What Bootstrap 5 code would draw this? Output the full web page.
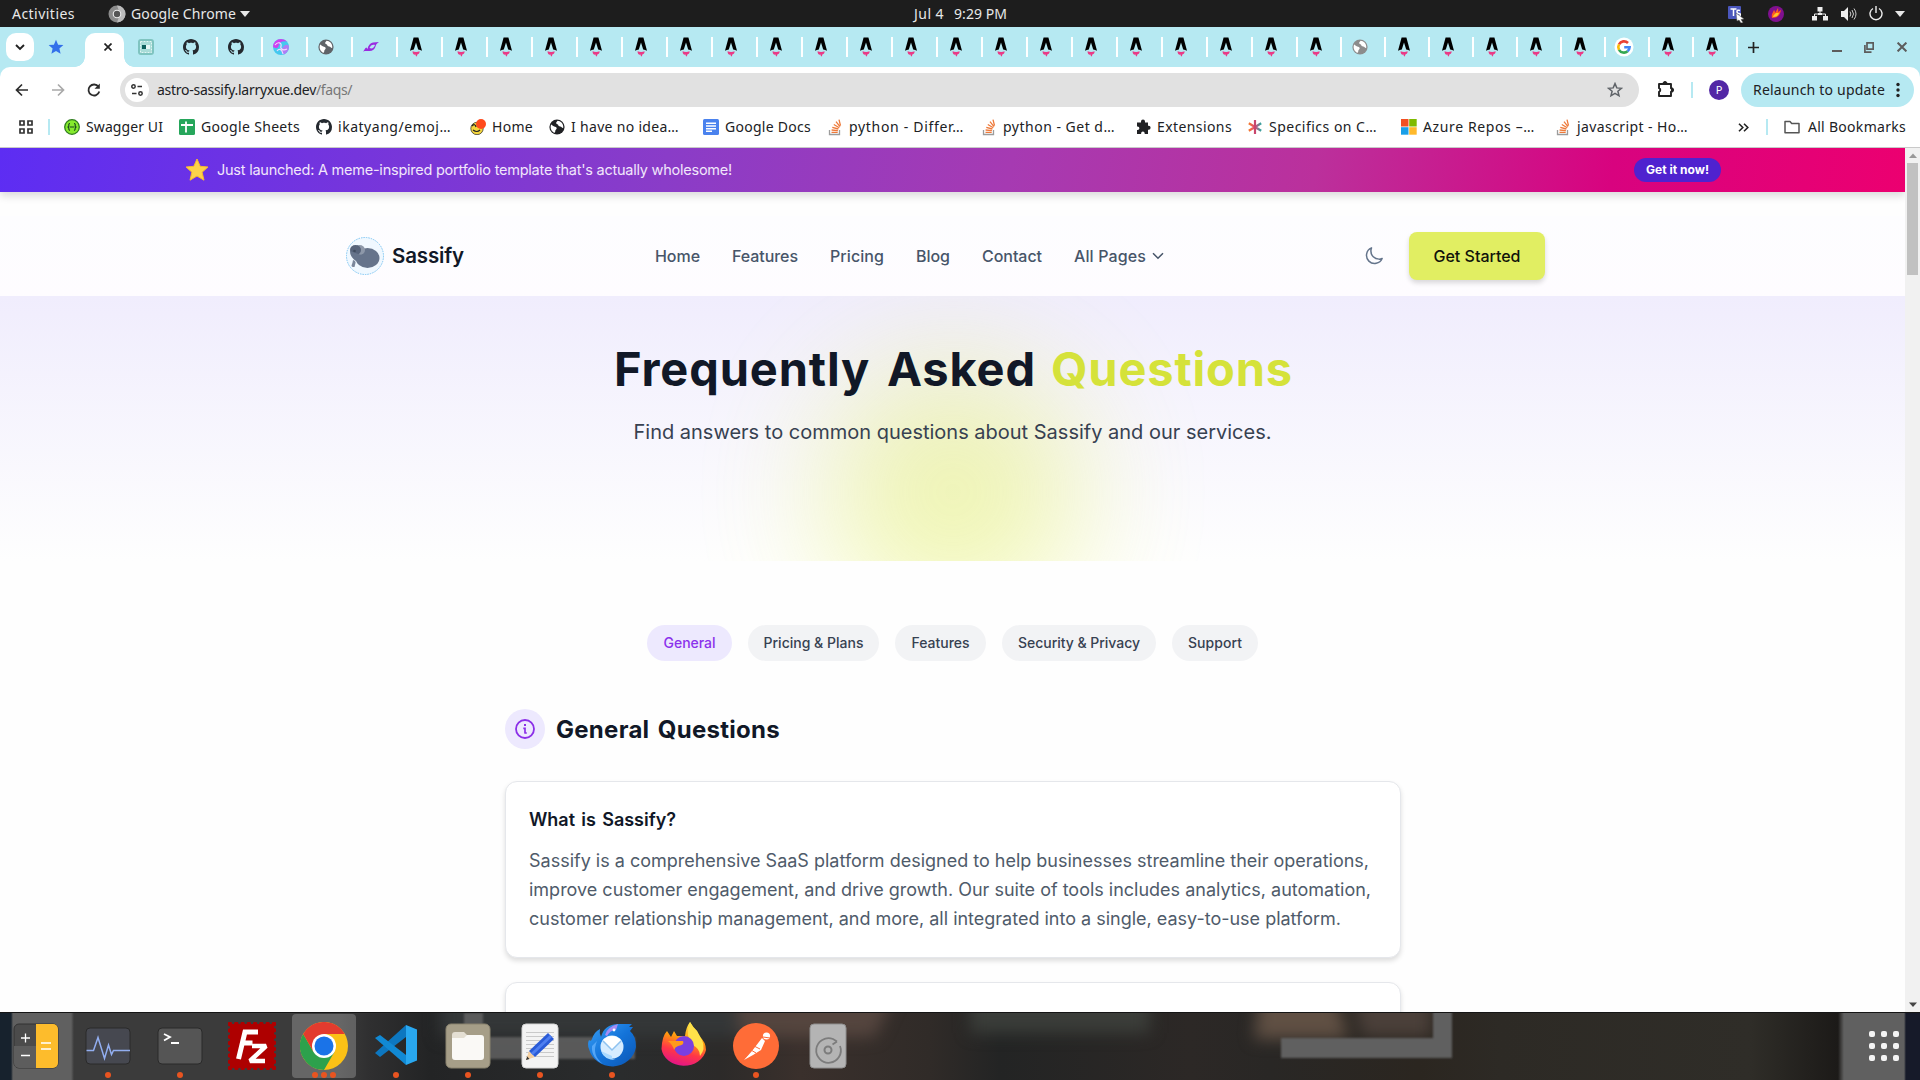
<!DOCTYPE html>
<html lang="en">
<head>
<meta charset="utf-8">
<title>FAQs - Sassify</title>
<link href="https://cdn.jsdelivr.net/npm/bootstrap@5.3.0/dist/css/bootstrap.min.css" rel="stylesheet">
<style>
body{width:1920px;height:1080px;overflow:hidden;font-family:Inter,"Liberation Sans",sans-serif;background:#fff}
svg{display:block;flex:none}
.ui{font-family:"Noto Sans","Open Sans",sans-serif;font-size:14px}
[data-w]{display:inline-block;white-space:nowrap;flex:none}
.topbar{height:27px;background:#1d1d1d;color:#e8e8e8;line-height:27px;padding:0 15px 0 12px}
.topbar .side{width:902px}
.tabstrip{height:40px;background:#b6e9f2;padding-left:6px}
.chev{width:28px;height:28px;border-radius:10px;background:#fff;margin-top:6px}
.tab-on{width:39px;height:34px;background:#fff;border-radius:10px 10px 0 0;margin:6px 0 0 25px;padding-left:19px;position:relative}
.tab-on::before,.tab-on::after{content:"";position:absolute;bottom:0;width:10px;height:10px}
.tab-on::before{left:-10px;background:radial-gradient(circle at 0 0,transparent 9.5px,#fff 10px)}
.tab-on::after{right:-10px;background:radial-gradient(circle at 100% 0,transparent 9.5px,#fff 10px)}
.tabcell{width:45px;height:20px;border-left:2px solid #fff;padding-left:8px;flex:none}
.tabcell.slim{width:44px}
.toolbar{height:46px;background:#fff;border-radius:10px 10px 0 0;padding-left:14px}
.toolbar [data-w],.marks [data-w]{margin-top:-1px}
.corner{background:#b6e9f2}
.omni{width:1519px;height:34px;border-radius:17px;background:#e1e1e1;margin-left:18px;padding:0 16px 0 5px;color:#202124}
.tune{width:24px;height:24px;border-radius:50%;background:#fff}
.vline{width:2px;height:16px;background:#b6e9f2;flex:none}
.avatar{width:20px;height:20px;border-radius:50%;background:#5227a5;color:#fff;font-size:11px;line-height:20px;text-align:center}
.relaunch{width:173px;height:34px;border-radius:17px;background:#b6e9f2;padding:0 11px 0 12px;color:#202124}
.marks{height:35px;color:#202124;border-bottom:1px solid #c9c9c9;padding:0 14px 6px 19px;background:#fff}
.bm{display:flex;align-items:center;gap:6px;flex:none}
.view{height:864px}
.page{width:1905px;overflow:hidden;background:#fefefe}
.promo{height:44px;background:linear-gradient(100deg,#5d2df3 0%,#8a3cc8 35%,#a63ab2 53%,#bb309c 69%,#d8037f 84.5%,#ec0070 100%);color:#f1e6fb;box-shadow:0 4px 8px rgba(0,0,0,.14);padding:0 184px;font-size:14.5px;position:relative}
.getit{width:87px;height:24px;border-radius:12px;background:#4f22cf;color:#fff;font-weight:700;font-size:12px;line-height:24px;text-align:center}
.site-head{height:80px;margin-top:24px;background:linear-gradient(#fdfdff,#fefcff);padding:0 360px 0 346px;font-size:16px;font-weight:500;color:#475569}
.display-f{font-family:Inter,"Liberation Sans",sans-serif;font-weight:700;color:#111827;word-spacing:.1em}
.cta{width:136px;height:48px;border-radius:8px;background:#e1ee62;color:#10130a;line-height:48px;text-align:center;box-shadow:0 3px 5px rgba(0,0,0,.15)}
.hero{height:265px;background:linear-gradient(#f0edfd,#fefefe);overflow:hidden;position:relative}
.glow{position:absolute;left:825px;top:68px;width:256px;height:256px;border-radius:50%;background:#dcec3c;opacity:.38;filter:blur(64px)}
.hero-copy{position:relative}
.hero h1{font-size:47px;line-height:60px;margin:0;padding:43px 0 0 2px}
.lime{color:#d5e23a}
.hero p{font-size:20px;line-height:28px;color:#374151;margin:19px 0 0}
.pillbtn{height:36px;border-radius:18px;background:#f2f3f5;color:#374151;font-size:14px;font-weight:500;line-height:36px;text-align:center}
.pillbtn.on{background:#ede9fe;color:#8b32ec}
.faq{width:896px;margin:48px 0 0 505px}
.roundic{width:40px;height:40px;border-radius:50%;background:#ede9fe}
.faq h2{font-size:24px;line-height:40px;margin:0;padding-top:1px;height:40px}
.faq-card{border:1px solid #e5e7eb;border-radius:12px;box-shadow:0 3px 5px rgba(0,0,0,.13);padding:24px 23px 0;height:177px;background:#fff;margin-bottom:24px}
.faq-card h3{font-size:18px;line-height:28px;font-weight:600;margin:0 0 12px}
.faq-card p{font-size:18px;line-height:29px;color:#4f5b6a;margin:0}
.sbar{width:15px;background:#f1f1f1}
.thumb{width:11px;height:112px;background:#c1c1c1;margin:0 auto}
.dock{height:68px;position:relative;overflow:hidden;border-top:1px solid #151515;
background:linear-gradient(90deg,#17222d 0 11px,#606060 13px 71px,#3b3b3b 74px 340px,#2f2f30 370px,#232425 430px,#2a2c2d 620px,#2c2a29 720px,#3a302c 800px,#302b28 930px,#232424 1000px,#2c2826 1190px,#292725 1270px,#2b2620 1420px,#2d2a25 1500px,#2f2d28 1750px,#1c1a18 1838px,#606060 1844px 1904px,#161a29 1906px)}
.wall{position:absolute;left:0;top:0}
.app{width:72px;height:67px;position:relative;flex:none;display:flex;justify-content:center}
.app>svg{margin-top:9px}
.app.on::before{content:"";position:absolute;left:4px;top:1px;width:64px;height:64px;border-radius:4px;background:rgba(255,255,255,.22)}
.app.on>svg{position:relative}
.dots{position:absolute;bottom:2px;left:0;right:0;display:flex;justify-content:center;gap:3px}
.dots i{width:6px;height:6px;border-radius:50%;background:#e95420}
</style>
<script src="https://cdn.jsdelivr.net/npm/bootstrap@5.3.0/dist/js/bootstrap.bundle.min.js"></script>
</head>
<body class="d-flex flex-column">
<svg width="0" height="0" class="position-absolute">
<defs>
<linearGradient id="gsw" x1="0" x2="1" y2="1"><stop offset="0" stop-color="#d33cf0"/><stop offset=".5" stop-color="#4fd0f0"/><stop offset="1" stop-color="#e870e0"/></linearGradient>
<linearGradient id="gff" x1=".7" y1="0" x2=".4" y2="1"><stop offset="0" stop-color="#fff44f"/><stop offset=".4" stop-color="#ff980e"/><stop offset=".7" stop-color="#ff3647"/><stop offset="1" stop-color="#e31587"/></linearGradient>
<linearGradient id="gtb" x1="0" y1="0" x2="1" y2="1"><stop offset="0" stop-color="#3aa0f5"/><stop offset=".5" stop-color="#1373d9"/><stop offset="1" stop-color="#0b56b4"/></linearGradient>
<linearGradient id="gas" x1="0" x2="1"><stop offset="0" stop-color="#f4792b"/><stop offset=".5" stop-color="#e0457b"/><stop offset="1" stop-color="#2ba7a0"/></linearGradient>
<symbol id="astro" viewBox="0 0 20 20"><path d="M7.600 .5h4.800L16 13.800a13 13 0 0 0-3.800-1.200L10 5.400l-2.200 7.200A13 13 0 0 0 4 13.800z" fill="#000"/><path d="M6.600 14.200c2 1 5 1 6.900 0 .3 1.600-.4 2.300-1.300 2.800-.8.400-1.200 1-1.200 2.500-1-.3-1.500-1-1.500-2-1.600.6-3.200-1-2.900-3.300z" fill="#ea3a86"/></symbol>
<symbol id="gh" viewBox="0 0 16 16"><path fill="#24292f" d="M8 0C3.580 0 0 3.580 0 8c0 3.540 2.290 6.530 5.470 7.590.4.070.55-.17.55-.38 0-.19-.01-.82-.01-1.490-2.010.37-2.530-.49-2.690-.94-.09-.23-.48-.94-.82-1.130-.28-.15-.68-.52-.01-.53.63-.01 1.080.58 1.230.82.72 1.210 1.870.87 2.330.66.07-.52.28-.87.51-1.070-1.780-.2-3.640-.89-3.640-3.950 0-.87.31-1.590.82-2.150-.08-.2-.36-1.020.08-2.120 0 0 .67-.21 2.200.82.64-.18 1.320-.27 2-.27s1.360.09 2 .27c1.530-1.040 2.200-.82 2.200-.82.44 1.100.16 1.920.08 2.120.51.56.82 1.270.82 2.150 0 3.070-1.870 3.750-3.650 3.950.29.25.54.73.54 1.480 0 1.070-.01 1.930-.01 2.200 0 .21.15.46.55.38A8.010 8.010 0 0 0 16 8c0-4.420-3.580-8-8-8z"/></symbol>
<symbol id="globe" viewBox="0 0 16 16"><circle cx="8" cy="8" r="7.600" fill="currentColor"/><path d="M2 5.500c1.500.5 2 2 4 2.200 1.200.3 2 .8 1.600 2-.3 1-1.300 1-1.300 2.200 0 1-.6 1.500-1 2C3 12.700 1.600 10.500 1.600 8z" fill="#fff"/><path d="M8.500 1.700C8 3 7 3 7.200 4.200 7.600 5.500 9.500 5 9.400 6.500c.2 1.200 1.600.6 2.600 1.300.8.600 1.300 1.200 2.200 1.300.3-2-.3-4.100-1.700-5.500A6 6 0 0 0 8.500 1.700z" fill="#fff"/></symbol>
<symbol id="goog" viewBox="0 0 20 20"><circle cx="10" cy="10" r="9.500" fill="#fff"/><g fill="none" stroke-width="2.600"><path d="M14 6A5.700 5.700 0 0 0 5 7.300" stroke="#ea4335"/><path d="M5 7.300a5.700 5.700 0 0 0 0 5.500" stroke="#fbbc05"/><path d="M5 12.800a5.700 5.700 0 0 0 8.600 1.400" stroke="#34a853"/><path d="M13.600 14.200a5.700 5.700 0 0 0 2-4h-5.400" stroke="#4285f4"/></g></symbol>
<symbol id="teal" viewBox="0 0 20 20"><rect x="2" y="2" width="16" height="16" rx="3" fill="#7fc4c0"/><rect x="4.500" y="4.500" width="11" height="11" fill="#a9dcd8" stroke="#e2f6f4" stroke-dasharray="2 1"/><rect x="6" y="8" width="4" height="4" fill="#0d5f5c"/><path d="M10 8h4v4h-4z" fill="#e8f8f6"/></symbol>
<symbol id="swirl" viewBox="0 0 20 20"><circle cx="10" cy="10" r="8" fill="#45c8ef"/><path d="M2 10a8 8 0 0 1 8-8q4 0 6 2.500Q9 3 8 8t-6 2z" fill="#d040f0"/><path d="M18 9q0 6-5 8.500Q9 14 12 10t6-1z" fill="#b07cf5"/><path d="M4 8c3-4 7-2 6 1s2 5 6 3M6 14c2-3 5-2 6 3" stroke="#f0d8ff" fill="none" stroke-width="1.200"/></symbol>
<symbol id="bird" viewBox="0 0 20 20"><path d="M2 14.500c1.500-1 2-4 3.500-4l1 1.500q1-5.500 5.500-6.500 3-.5 6-.5c-2 1.500-3 2-3.500 4.500s-3 4.500-6 4.500-4-.3-6.500.5z" fill="#9a2be0"/><path d="M8.500 11c1-3 3.500-4 5.500-3-1 3-3 4.200-5.500 3z" fill="#b6e9f2"/></symbol>
<symbol id="so" viewBox="0 0 16 18"><path d="M2.500 12v4.500h10V12" fill="none" stroke="#9c9c9c" stroke-width="1.300"/><g stroke="#ee7a3a" stroke-width="1.300"><path d="M4.500 14.300h6.200M4.600 12l6.300.7M5.300 9.300l6.100 1.700M6.800 6.500l5.500 3.200M9 3.700l4 5M12 1.600l1.500 6"/></g></symbol>
<symbol id="pz" viewBox="0 0 16 16"><path d="M6 2.500a2 2 0 0 1 4 0V3.500h3v3.200h.6a2 2 0 0 1 0 4H13V15H9.700v-.6a1.800 1.800 0 0 0-3.600 0v.6H2v-4h.6a1.800 1.800 0 0 0 0-3.600H2V3.500h4z" fill="#202124"/></symbol>
</defs></svg>

<header class="topbar ui d-flex align-items-center">
  <div class="side d-flex align-items-center">
    <span data-w="63">Activities</span>
    <svg width="18" height="18" viewBox="0 0 18 18" style="margin:0 5px 0 33px"><circle cx="9" cy="9" r="8.500" fill="#8b8b8b"/><path d="M9 .5A8.500 8.500 0 0 1 9 17.500L12 9z" fill="#bcbcbc"/><circle cx="9" cy="9" r="4.300" fill="#eee"/><circle cx="9" cy="9" r="3.200" fill="#555"/></svg>
    <span data-w="105">Google Chrome</span>
    <svg width="10" height="6" class="ms-1"><path d="M0 0h10L5 6z" fill="#e8e8e8"/></svg>
  </div>
  <span data-w="30">Jul 4</span><span data-w="53" style="margin-left:10px">9:29 PM</span>
  <div class="ms-auto d-flex align-items-center">
    <svg width="18" height="18" viewBox="0 0 18 18"><rect x="1" y="1" width="13" height="13" rx="1" fill="#4b57bd"/><path d="M3.500 4h6M6.500 4v7M13 5.500q-3-1-3 1t2 2 1 2.500-3 .5" fill="none" stroke="#fff" stroke-width="1.500"/><path d="M9 8l8 6-3 .5 2 3-2 .5-2-3-2 1z" fill="#fff" stroke="#555" stroke-width=".5"/></svg>
    <svg width="18" height="18" viewBox="0 0 18 18" style="margin-left:22px"><circle cx="9" cy="9" r="8" fill="#80108f"/><path d="M5 13c-1-4 1-5 2-8 1 1 1 2 1 3l3-5c.5 2 0 3 .2 4L14 5c-1 4-2 8-9 8z" fill="#ff5b1f"/><path d="M6 12c0-2 2-3 3-4l3 0c-1 3-3 4-6 4z" fill="#ffc928"/></svg>
    <svg width="16" height="14" viewBox="0 0 16 14" style="margin-left:27px"><path d="M8 3v4M2.500 10V7h11v3" stroke="#eee" fill="none"/><path d="M5.500 0h5v4.500h-5zM0 9h5v4.500H0zM11 9h5v4.500h-5zM6 6h4v2H6z" fill="#eee"/></svg>
    <svg width="16" height="14" viewBox="0 0 16 14" style="margin-left:13px"><path d="M0 4h3l4-4v14l-4-4H0z" fill="#eee"/><path d="M9 4.500q1.700 2.500 0 5M11 3q3 4 0 8M13 1.500q4 5.500 0 11" stroke="#ccc" fill="none"/></svg>
    <svg width="14" height="15" viewBox="0 0 14 15" style="margin-left:12px"><path d="M4 2.500a6 6 0 1 0 6 0M7 0v7" stroke="#eee" fill="none" stroke-width="1.400"/></svg>
    <svg width="10" height="6" style="margin-left:12px"><path d="M0 0h10L5 6z" fill="#e8e8e8"/></svg>
  </div>
</header>

<div class="tabstrip d-flex align-items-start">
  <div class="chev d-flex align-items-center justify-content-center"><svg width="10" height="7" viewBox="0 0 10 7"><path d="M1 1l4 4 4-4" fill="none" stroke="#222" stroke-width="1.900"/></svg></div>
  <svg width="16" height="16" viewBox="0 0 16 16" style="margin:12px -4px 0 14px"><path d="M8 .8l2.100 4.900 5.300.4-4 3.500 1.200 5.200L8 12l-4.600 2.800 1.200-5.200-4-3.500 5.300-.4z" fill="#3370ea"/></svg>
  <div class="tab-on d-flex align-items-center"><svg width="8" height="8" viewBox="0 0 8 8" style="margin-top:-6px"><path d="M.5.5l7 7M7.500.5l-7 7" stroke="#222" stroke-width="1.700"/></svg></div>
  <svg width="20" height="20" style="margin:10px 15px 0 12px"><use href="#teal"/></svg>
  <div id="tabs" class="d-flex" style="margin-top:10px"></div>
  <div class="tabcell" style="margin-top:10px;width:18px"></div>
  <svg width="11" height="11" viewBox="0 0 11 11" style="margin-top:15px;margin-left:-6px"><path d="M5.500 0v11M0 5.500h11" stroke="#222" stroke-width="1.700"/></svg>
  <div class="ms-auto d-flex align-items-center" style="margin:14px 13px 0 0;gap:22px">
    <svg width="10" height="12"><path d="M0 10h10" stroke="#5c5c5c" stroke-width="2"/></svg>
    <svg width="10" height="11" viewBox="0 0 10 11" style="margin-right:1px"><path d="M3 .9h6.200v6.200H3zM.9 3v7.100H7.500" fill="none" stroke="#5c5c5c" stroke-width="1.700"/></svg>
    <svg width="10" height="10" viewBox="0 0 10 10"><path d="M.6.6l8.800 8.800M9.400.6L.6 9.400" stroke="#5c5c5c" stroke-width="2"/></svg>
  </div>
</div>

<div class="corner"><div class="toolbar ui d-flex align-items-center">
  <svg width="16" height="16" viewBox="0 0 16 16"><path d="M14 8H3M8 2.500L2.500 8 8 13.500" fill="none" stroke="#2c2c2c" stroke-width="1.700"/></svg>
  <svg width="16" height="16" viewBox="0 0 16 16" style="margin-left:20px"><path d="M2 8h11M8 2.500L13.500 8 8 13.500" fill="none" stroke="#a9a9a9" stroke-width="1.700"/></svg>
  <svg width="16" height="16" viewBox="0 0 16 16" style="margin-left:20px"><path d="M13.300 9.500A5.500 5.500 0 1 1 12.500 4.800" fill="none" stroke="#2c2c2c" stroke-width="1.800"/><path d="M13.800 1.500v5.300H8.500z" fill="#2c2c2c"/></svg>
  <div class="omni d-flex align-items-center">
    <div class="tune d-flex align-items-center justify-content-center"><svg width="12" height="12" viewBox="0 0 12 12" fill="none" stroke="#333" stroke-width="1.500"><circle cx="2.500" cy="2.500" r="1.700"/><path d="M6.500 2.500H11M1 9.500h4.500"/><circle cx="9.500" cy="9.500" r="1.700"/></svg></div>
    <span data-w="159" style="margin-left:8px">astro-sassify.larryxue.dev</span><span data-w="36" style="color:#777">/faqs/</span>
    <svg width="16" height="16" viewBox="0 0 16 16" class="ms-auto"><path d="M8 1.600l1.800 4.300 4.600.4-3.500 3 1.100 4.500L8 11.400l-4 2.400 1.100-4.500-3.500-3 4.600-.4z" fill="none" stroke="#5f6368" stroke-width="1.500"/></svg>
  </div>
  <svg width="18" height="18" viewBox="0 0 18 18" style="margin-left:18px;margin-top:-2px"><path d="M2 4h12v4.300a1.700 1.700 0 0 1 0 3.400V16H2v-4.200a1.900 1.900 0 0 0 0-3.600z" fill="none" stroke="#222" stroke-width="1.900" stroke-linejoin="round"/><path d="M6 3.500a2 2 0 0 1 4 0zM14.500 8a2 2 0 0 1 0 4z" fill="#222" stroke="#222"/></svg>
  <div class="vline" style="margin:0 16px 0 16px"></div>
  <div class="avatar">P</div>
  <div class="relaunch d-flex align-items-center justify-content-between" style="margin-left:12px"><span data-w="132">Relaunch to update</span><svg width="10" height="16"><g fill="#222"><circle cx="5" cy="2.500" r="1.700"/><circle cx="5" cy="8" r="1.700"/><circle cx="5" cy="13.500" r="1.700"/></g></svg></div>
</div></div>

<div class="marks ui d-flex align-items-center">
  <svg width="14" height="14" viewBox="0 0 14 14" fill="none" stroke="#333" stroke-width="1.700"><path d="M1 1h4v4H1zM9 1h4v4H9zM1 9h4v4H1zM9 9h4v4H9z"/></svg>
  <div class="vline" style="margin:0 14px 0 15px"></div>
  <div class="bm" style="width:115px"><svg width="16" height="16" viewBox="0 0 16 16"><circle cx="8" cy="8" r="7.300" fill="#85ea2d" stroke="#2f7d1e" stroke-width="1.300"/><path d="M6 4.500q-1.500 0-1.200 2T3.500 8q1.500 0 1.300 1.500T6 11.500M10 4.500q1.500 0 1.200 2T12.500 8q-1.500 0-1.300 1.500T10 11.500M6 8h4" fill="none" stroke="#17401f" stroke-width="1.100"/></svg><span data-w="77">Swagger UI</span></div>
  <div class="bm" style="width:137px"><svg width="16" height="16" viewBox="0 0 16 16"><rect width="16" height="16" rx="1.500" fill="#26a65b"/><path d="M2 6h12M7 2.500v11" stroke="#fff" stroke-width="1.800"/></svg><span data-w="99">Google Sheets</span></div>
  <div class="bm" style="width:154px"><svg width="16" height="16"><use href="#gh"/></svg><span data-w="113">ikatyang/emoj…</span></div>
  <div class="bm" style="width:79px"><svg width="16" height="16" viewBox="0 0 16 16"><circle cx="7" cy="9.500" r="6.200" fill="#f5d63d" stroke="#222" stroke-width=".7"/><circle cx="11" cy="5" r="5" fill="#ff4a1c"/><path d="M2 7q3-3 4 1M3 11q4 3 7 0" stroke="#222" fill="none" stroke-width="1.200"/></svg><span data-w="41">Home</span></div>
  <div class="bm" style="width:154px"><svg width="16" height="16" color="#202124"><use href="#globe"/></svg><span data-w="108">I have no idea…</span></div>
  <div class="bm" style="width:124px"><svg width="16" height="16" viewBox="0 0 16 16"><rect width="16" height="16" rx="1.500" fill="#4a82ee"/><path d="M3 4.300h10M3 7h10M3 9.700h10M3 12.300h6" stroke="#fff" stroke-width="1.400"/></svg><span data-w="86">Google Docs</span></div>
  <div class="bm" style="width:154px"><svg width="16" height="18"><use href="#so"/></svg><span data-w="115">python - Differ…</span></div>
  <div class="bm" style="width:154px"><svg width="16" height="18"><use href="#so"/></svg><span data-w="112">python - Get d…</span></div>
  <div class="bm" style="width:112px"><svg width="16" height="16"><use href="#pz"/></svg><span data-w="75">Extensions</span></div>
  <div class="bm" style="width:154px"><svg width="16" height="16" viewBox="0 0 16 16"><path d="M8 1v14M1.800 4.200l12.400 7.600M14.200 4.200L1.800 11.800" stroke="url(#gas)" stroke-width="2.200"/><path d="M8 1.200v13.600" stroke="#c8466d" stroke-width="2"/></svg><span data-w="108">Specifics on C…</span></div>
  <div class="bm" style="width:154px"><svg width="16" height="16" viewBox="0 0 16 16"><path d="M0 0h7.500v7.500H0z" fill="#f25022"/><path d="M8.200 0h7.500v7.500H8.200z" fill="#7fba00"/><path d="M0 8.200h7.500v7.500H0z" fill="#1a9fe8"/><path d="M8.200 8.200h7.500v7.500H8.200z" fill="#ffb92b"/></svg><span data-w="112">Azure Repos –…</span></div>
  <div class="bm" style="width:154px"><svg width="16" height="18"><use href="#so"/></svg><span data-w="111">javascript - Ho…</span></div>
  <svg width="11" height="9" viewBox="0 0 11 9" class="ms-auto"><path d="M1 .7l3.800 3.800L1 8.300M6 .7l3.800 3.800L6 8.300" fill="none" stroke="#222" stroke-width="1.600"/></svg>
  <div class="vline" style="margin:0 16px 0 17px"></div>
  <svg width="16" height="14" viewBox="0 0 16 14"><path d="M1 12.800V1.500h5l1.700 2H15v9.300z" fill="none" stroke="#555" stroke-width="1.500" stroke-linejoin="round"/></svg>
  <span data-w="98" style="margin-left:8px">All Bookmarks</span>
</div>

<main class="view d-flex">
  <div class="page">
    <div class="promo d-flex align-items-center">
      <svg width="26" height="26" viewBox="0 0 26 26"><path d="M13 2l3.200 7.300 7.800.7-5.900 5.200 1.900 8-7-4.200-7 4.200 1.900-8L2 10l7.800-.7z" fill="#fdd34a" stroke="#f6b92f" stroke-width="1" stroke-linejoin="round"/></svg>
      <span data-w="515" style="margin-left:7px">Just launched: A meme-inspired portfolio template that's actually wholesome!</span>
      <div class="getit ms-auto"><span data-w="63">Get it now!</span></div>
    </div>
    <div class="site-head d-flex align-items-center">
      <svg width="38" height="38" viewBox="0 0 38 38"><circle cx="19" cy="19" r="18.500" fill="#f0f8ff" stroke="#7cc5f2" stroke-dasharray="1.500 1"/><path d="M7 23q3 1 2.500 3t-1 4q-3 .5-3-1.500 1-2 1.500-5.500z" fill="#7b879b"/><ellipse cx="21.500" cy="21" rx="12" ry="10" fill="#66748b"/><ellipse cx="13.500" cy="13" rx="5.500" ry="5" fill="#8d98a9"/><ellipse cx="9.500" cy="13" rx="5.500" ry="5" fill="#56637a"/><circle cx="8.500" cy="14" r="1.300" fill="#3f4b5e"/><path d="M4 14q0 6 6 10l5-6z" fill="#66748b"/></svg>
      <span class="display-f" style="margin-left:8px;font-size:20.500px;font-weight:600" data-w="72">Sassify</span>
      <nav class="d-flex align-items-center" style="gap:32px;margin-left:191px">
        <span data-w="45">Home</span><span data-w="66">Features</span><span data-w="54">Pricing</span><span data-w="34">Blog</span><span data-w="60">Contact</span>
        <span class="d-flex align-items-center" style="gap:6px"><span data-w="72">All Pages</span><svg width="12" height="8" viewBox="0 0 12 8"><path d="M1 1.200l5 5 5-5" fill="none" stroke="#475569" stroke-width="1.500"/></svg></span>
      </nav>
      <svg width="20" height="20" viewBox="0 0 24 24" class="ms-auto" fill="none" stroke="#64748b" stroke-width="1.800" stroke-linejoin="round"><path d="M21.750 15A9.700 9.700 0 0 1 18 15.750 9.750 9.750 0 0 1 8.250 6c0-1.330.27-2.600.75-3.750A9.750 9.750 0 1 0 21.750 15z"/></svg>
      <div class="cta" style="margin-left:25px"><span data-w="87">Get Started</span></div>
    </div>
    <section class="hero text-center">
      <div class="glow"></div>
      <div class="hero-copy">
        <h1 class="display-f"><span data-w="422">Frequently Asked</span><span class="lime" style="margin-left:15px" data-w="242">Questions</span></h1>
        <p><span data-w="638">Find answers to common questions about Sassify and our services.</span></p>
      </div>
    </section>
    <div class="d-flex justify-content-center" style="gap:16px;margin-top:64px">
      <div class="pillbtn on" style="width:85px"><span data-w="52">General</span></div>
      <div class="pillbtn" style="width:131px"><span data-w="100">Pricing &amp; Plans</span></div>
      <div class="pillbtn" style="width:91px"><span data-w="58">Features</span></div>
      <div class="pillbtn" style="width:154px"><span data-w="122">Security &amp; Privacy</span></div>
      <div class="pillbtn" style="width:86px"><span data-w="54">Support</span></div>
    </div>
    <section class="faq">
      <div class="d-flex align-items-center" style="gap:11px;margin-bottom:32px">
        <div class="roundic d-flex align-items-center justify-content-center"><svg width="20" height="20" viewBox="0 0 20 20" fill="none" stroke="#8b2fe8" stroke-width="1.800"><circle cx="10" cy="10" r="9"/><path d="M8.300 9.300H10V14M9.300 14h2.500" stroke-width="1.700"/><path d="M9 6h2" stroke-width="1.800"/></svg></div>
        <h2 class="display-f"><span data-w="224">General Questions</span></h2>
      </div>
      <article class="faq-card">
        <h3 class="display-f"><span data-w="147">What is Sassify?</span></h3>
        <p><span data-w="840">Sassify is a comprehensive SaaS platform designed to help businesses streamline their operations,</span><br><span data-w="842">improve customer engagement, and drive growth. Our suite of tools includes analytics, automation,</span><br><span data-w="812">customer relationship management, and more, all integrated into a single, easy-to-use platform.</span></p>
      </article>
      <article class="faq-card"></article>
    </section>
  </div>
  <div class="sbar d-flex flex-column justify-content-between">
    <div><svg width="15" height="15"><path d="M4 10h8L8 5.500z" fill="#999"/></svg><div class="thumb"></div></div>
    <svg width="15" height="15"><path d="M4 5.500h8L8 10z" fill="#444"/></svg>
  </div>
</main>

<footer class="dock d-flex">
  <svg class="wall" width="1920" height="67" viewBox="0 0 1920 67">
    <defs><filter id="soft" filterUnits="userSpaceOnUse" x="380" y="-60" width="1200" height="180" color-interpolation-filters="sRGB"><feGaussianBlur stdDeviation="8"/></filter><filter id="edge"><feGaussianBlur stdDeviation="1"/></filter></defs>
    <g filter="url(#soft)"><path d="M440-20h300v44H440z" fill="#343738"/><path d="M735-20h160l-20 44H740z" fill="#5c4b44" opacity=".8"/><path d="M970-20h180v40H970z" fill="#40433e" opacity=".8"/><path d="M1260-20h75l14 46h-95z" fill="#665447" opacity=".9"/><path d="M1352-20h80v44h-70z" fill="#4b403a"/></g>
    <g fill="#606060" filter="url(#edge)"><path d="M464 0h19v24h152v22H464z" opacity=".85"/><path d="M1433-4h19v49h-171V25h152z"/></g>
    <g fill="#f4f4f4"><rect x="1869" y="18" width="6" height="6" rx="2"/><rect x="1881" y="18" width="6" height="6" rx="2"/><rect x="1893" y="18" width="6" height="6" rx="2"/><rect x="1869" y="30" width="6" height="6" rx="2"/><rect x="1881" y="30" width="6" height="6" rx="2"/><rect x="1893" y="30" width="6" height="6" rx="2"/><rect x="1869" y="42" width="6" height="6" rx="2"/><rect x="1881" y="42" width="6" height="6" rx="2"/><rect x="1893" y="42" width="6" height="6" rx="2"/></g>
  </svg>
  <div class="app"><svg width="48" height="48" viewBox="0 0 48 48"><rect x="2" y="2" width="44" height="44" rx="5" fill="#4b4b4b" stroke="#333"/><path d="M2 24h22v22H7a5 5 0 0 1-5-5z" fill="#5d5d5d"/><path d="M24 2h17a5 5 0 0 1 5 5v34a5 5 0 0 1-5 5H24z" fill="#fdbc2c"/><path d="M9 16h9M13.500 11.500v9M9 33.500h9M29 21h10M29 27h10" stroke="#fff" stroke-width="1.300"/></svg></div>
  <div class="app"><svg width="48" height="48" viewBox="0 0 48 48"><rect x="2" y="6" width="44" height="36" rx="4" fill="#464850" stroke="#2a2a2a"/><path d="M2.500 28.500h7l4.500-13 6.500 21 4-13.500 3 9.500 2-4H46" fill="none" stroke="#92aef0" stroke-width="1.500"/></svg><div class="dots"><i></i></div></div>
  <div class="app"><svg width="48" height="48" viewBox="0 0 48 48"><rect x="2" y="6" width="44" height="36" rx="4" fill="#555" stroke="#2a2a2a"/><path d="M8 12l6 3-6 3.500M15 21h8" fill="none" stroke="#fff" stroke-width="1.800"/></svg><div class="dots"><i></i></div></div>
  <div class="app"><svg width="48" height="48" viewBox="0 0 48 48"><rect x="2" y="2" width="44" height="44" fill="#ae0000"/><g fill="none" stroke="#ae0000" stroke-width="4.500" stroke-linecap="round" stroke-dasharray="0 6.280"><path d="M2 2h44v44H2z"/></g><path d="M10.500 37L17 10h13M14 21h10.500" fill="none" stroke="#fff" stroke-width="5"/><path d="M24 24h14L22 39h15" fill="none" stroke="#fff" stroke-width="4.500" stroke-linejoin="bevel"/></svg></div>
  <div class="app on"><svg width="48" height="48" viewBox="0 0 48 48"><circle cx="24" cy="24" r="24" fill="#fbc116"/><path d="M3.200 12A24 24 0 0 0 24 48L34.400 30 24 24 13.600 30z" fill="#2da14c"/><path d="M3.200 12L13.600 30 24 24V12H44.800A24 24 0 0 0 3.200 12z" fill="#e33b2e"/><circle cx="24" cy="24" r="12" fill="#fff"/><circle cx="24" cy="24" r="9.500" fill="#1a73e8"/></svg><div class="dots"><i></i><i></i><i></i></div></div>
  <div class="app"><svg width="44" height="46" viewBox="0 0 44 46"><path d="M1 31L32 3v12L6 35z" fill="#0d77c0"/><path d="M1 16l5-3 26 20v10z" fill="#1189d4"/><path d="M32 3l11 4.500v31L32 43z" fill="#29a8f0"/></svg><div class="dots"><i></i></div></div>
  <div class="app"><svg width="48" height="48" viewBox="0 0 48 48"><rect x="2" y="2" width="44" height="44" rx="5" fill="#a69e88" stroke="#8a836f"/><path d="M8 13a3 3 0 0 1 3-3h9l4 4v6H8z" fill="#e4dfd3"/><path d="M8 16h12l3-3h14a3 3 0 0 1 3 3v19a3 3 0 0 1-3 3H11a3 3 0 0 1-3-3z" fill="#faf9f6"/></svg><div class="dots"><i></i></div></div>
  <div class="app"><svg width="48" height="48" viewBox="0 0 48 48"><rect x="6" y="2" width="36" height="44" rx="4" fill="#f3f3f3" stroke="#d5d5d5"/><path d="M10 10.500h28M10 14.500h28M10 18.500h28M10 22.500h28M10 26.500h28M10 30.500h28M10 34.500h28" stroke="#c9c9c9"/><path d="M10 38l3-9 6 6z" fill="#f5cfa0"/><path d="M10 38l1.200-3.500L13.500 37z" fill="#333"/><path d="M13 29l19-18 6 6-19 18z" fill="#2a5bd7"/><path d="M15 31l19-18 2 2-19 18z" fill="#4f7ff0"/></svg><div class="dots"><i></i></div></div>
  <div class="app"><svg width="50" height="50" viewBox="0 0 50 50"><path d="M2 18q2 2 3-1 2-7 8-10-1 4 1 8c2-8 8-13 17-13h14l-3 3h4l-3 4q6 5 6 16a24 23 0 0 1-47 2Q0 22 2 18z" fill="url(#gtb)"/><path d="M18 13q2-8 13-11l-2 6q-6 0-9 6z" fill="#a58cf3"/><path d="M10 19q-6 14 6 23-12-6-11-18z" fill="#6cb6ff" opacity=".7"/><circle cx="25" cy="25" r="11.500" fill="#d6ecff"/><path d="M16 18q9-8 18 0l-9 10z" fill="#fff"/><path d="M16 19l9 9 9-9" fill="none" stroke="#8fc2ef" stroke-width="1.500"/><path d="M14 29q3 9 15 9-5-1-4-4z" fill="#a9d9ff"/><circle cx="27" cy="8" r="1.400" fill="#fff"/></svg><div class="dots"><i></i></div></div>
  <div class="app"><svg width="48" height="48" viewBox="0 0 48 48"><path d="M7 9l4 6 3-6 3 5h8q1-9 5-14 3 5 7 9l2 5q7 6 7 14A22.500 19 0 0 1 1.500 27Q2 14 7 9z" fill="url(#gff)"/><path d="M30 0q2 5 7 9 3 5 5 9 4 9-2 16 0-8-8-11-7-9-2-23z" fill="#ffe14a"/><circle cx="24" cy="24" r="10" fill="#7a3fe0"/><path d="M8 19h15q2 4-5 5-3 1-4 4-1-5-6-9z" fill="#ff9a1c"/></svg></div>
  <div class="app"><svg width="48" height="48" viewBox="0 0 48 48"><circle cx="24" cy="24" r="23" fill="#ff6c37"/><circle cx="34.500" cy="14" r="3.600" fill="#fff"/><path d="M30 16l3 3-4 9-8 5-9 5 8-9z" fill="#fff"/><path d="M11 37.500l5-5M31 15l7 1M22 24l6 3M19 28l5 3" stroke="#ff6c37" stroke-width="1"/></svg><div class="dots"><i></i></div></div>
  <div class="app"><svg width="48" height="48" viewBox="0 0 48 48"><rect x="6" y="2" width="36" height="44" rx="4" fill="#b4b4b4" stroke="#8f8f8f"/><circle cx="24" cy="28" r="3.500" fill="none" stroke="#7c7c7c" stroke-width="2"/><path d="M36 24a12.300 12.300 0 1 1-7-7l4 2.500M33 19.500l-4.500 3" fill="none" stroke="#7c7c7c" stroke-width="1.800"/></svg></div>
</footer>

<script>
// Favicon strip, left to right.
const icons = ['gh','gh','swirl','globe','bird', ...Array(21).fill('astro'), 'globe', ...Array(5).fill('astro'), 'goog', 'astro', 'astro'];
document.getElementById('tabs').innerHTML = icons.map((n, i) => {
  const small = n === 'gh' || n === 'globe';
  const s = small ? 16 : 20;
  return `<div class="tabcell ${i > 24 ? 'slim' : ''} d-flex align-items-center"><svg width="${s}" height="${s}" color="${i > 10 ? '#8c8c8c' : '#5f6368'}" ${small ? 'style="margin-left:2px"' : ''}><use href="#${n}"/></svg></div>`;
}).join('');
// Track each label to its nominal width.
document.querySelectorAll('[data-w]').forEach(el => {
  const w = +el.dataset.w, n = el.textContent.length;
  const gap = (w - el.getBoundingClientRect().width) / n;
  el.style.letterSpacing = gap.toFixed(3) + 'px';
});
</script>
</body>
</html>
